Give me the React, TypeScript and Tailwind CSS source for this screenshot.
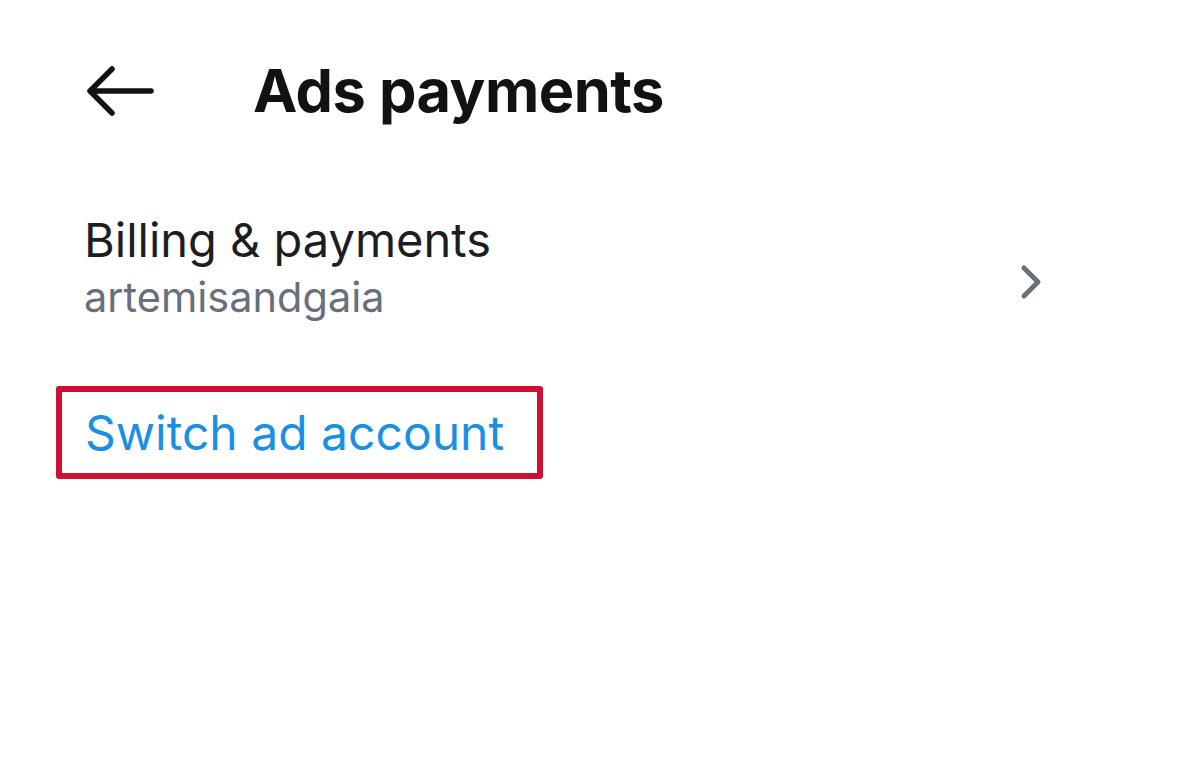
import React from "react";

export default function App() {
  return (
    <div className="w-[1200px] h-[771px] bg-white relative" style={{ fontFamily: "Inter, 'Noto Sans', sans-serif" }}>
      <div className="flex items-center h-[184px] pl-[85px] pb-[2px]">
        <svg width="70" height="52" viewBox="0 0 70 52" className="shrink-0">
          <path d="M66 26 H5 M27 4 L5 26 L27 48" fill="none" stroke="#111214" strokeWidth="5.5" strokeLinecap="round" strokeLinejoin="round" />
        </svg>
        <div className="ml-[98px] text-[59.5px] font-bold text-[#111214] leading-none tracking-[-0.5px]">Ads payments</div>
      </div>
      <div className="mt-[28px] flex items-center justify-between pl-[84px] pr-[152px]">
        <div className="flex flex-col">
          <div className="text-[47px] leading-[56px] text-[#1c1e21]">Billing &amp; payments</div>
          <div className="text-[41.5px] leading-[52px] mt-[3px] text-[#67707b]">artemisandgaia</div>
        </div>
        <svg width="30" height="40" viewBox="0 0 30 40" className="mt-[28px]">
          <path d="M6 6 L20 20 L6 34" fill="none" stroke="#6b7179" strokeWidth="5" strokeLinecap="round" strokeLinejoin="round" />
        </svg>
      </div>
      <div className="mt-[63px] ml-[56px] w-[487px] h-[93px] border-[6px] border-[#cc1133] rounded-[3px] flex items-center pl-[23px]">
        <span className="text-[48px] text-[#1a8fe3] leading-none">Switch ad account</span>
      </div>
    </div>
  );
}
